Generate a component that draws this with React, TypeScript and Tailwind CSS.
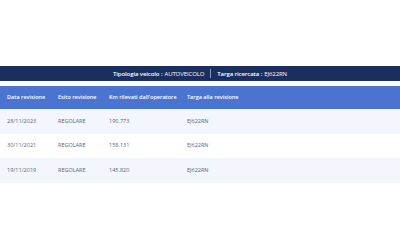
import React from "react";

const rows = [
  ["28/11/2023", "REGOLARE", "190.773", "EJ622RN"],
  ["30/11/2021", "REGOLARE", "158.131", "EJ622RN"],
  ["19/11/2019", "REGOLARE", "145.820", "EJ622RN"],
];

export default function App() {
  return (
    <div className="w-[400px] h-[250px] bg-white pt-[66px]" style={{ fontFamily: "'Open Sans', 'Liberation Sans', sans-serif" }}>
      <div className="h-[15px] bg-[#1b2f5e] flex items-center justify-center text-white text-[6px] leading-none tracking-[-0.1px]">
        <span className="font-semibold">Tipologia veicolo :</span>
        <span className="ml-[2px]">AUTOVEICOLO</span>
        <span className="mx-[6px] w-px h-[9px] bg-[#8a97b5]"></span>
        <span className="font-semibold">Targa ricercata :</span>
        <span className="ml-[2px]">EJ622RN</span>
      </div>
      <div className="mt-[5px] h-[23px] bg-[#4b74d0] grid grid-cols-[51px_51px_78px_1fr] items-center text-white text-[5.5px] font-semibold leading-none pl-[7px]">
        <div>Data revisione</div>
        <div>Esito revisione</div>
        <div>Km rilevati dall'operatore</div>
        <div>Targa alla revisione</div>
      </div>
      {rows.map((r, i) => (
        <div
          key={i}
          className={`h-[24.5px] grid grid-cols-[51px_51px_78px_1fr] items-center pl-[7px] text-[5.5px] text-[#5b6272] leading-none ${i % 2 === 0 ? "bg-[#f3f6fc]" : "bg-white"}`}
        >
          {r.map((c, j) => (
            <div key={j}>{c}</div>
          ))}
        </div>
      ))}
    </div>
  );
}
